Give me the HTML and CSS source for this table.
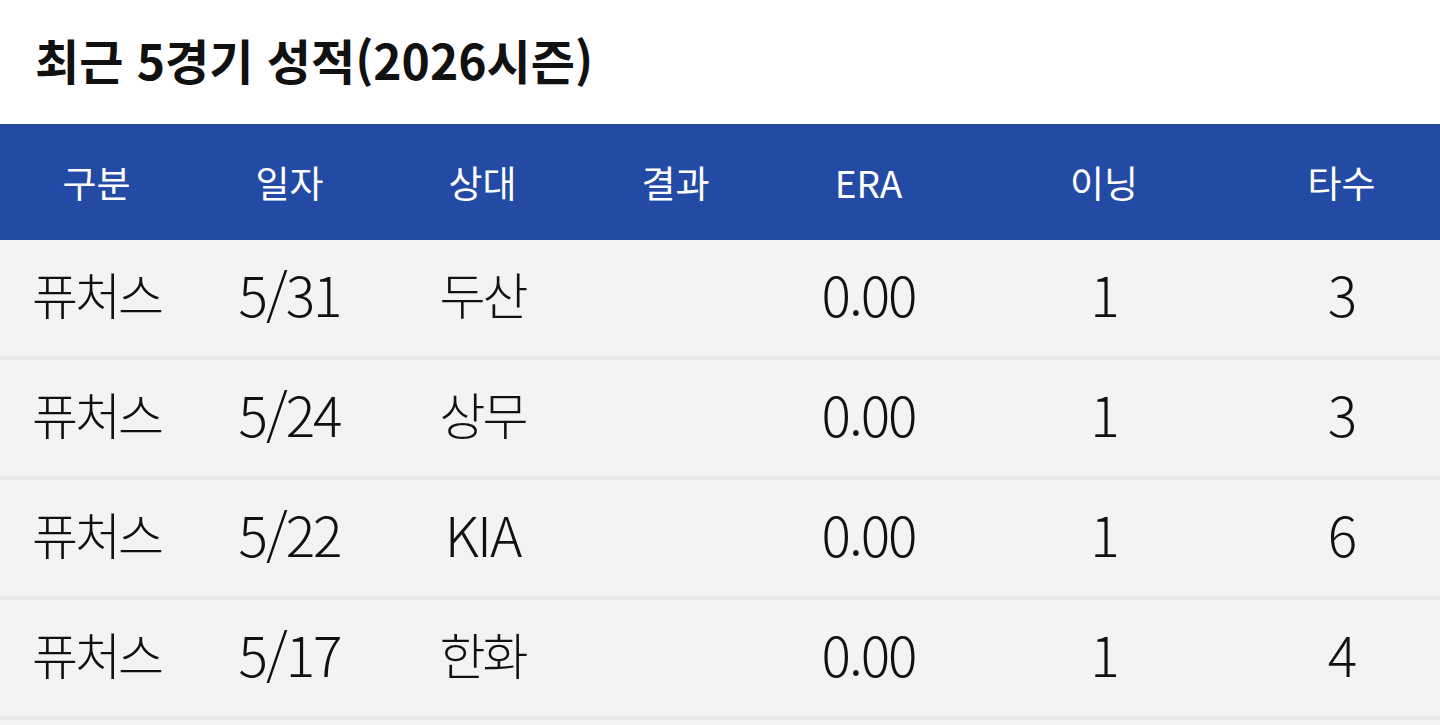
FILE: index.html
```html
<!DOCTYPE html>
<html lang="ko">
<head>
<meta charset="utf-8">
<title>최근 5경기 성적</title>
<link rel="stylesheet" href="styles.css">
</head>
<body>
<section class="panel">
  <h2 class="title">최근 5경기 성적(2026시즌)</h2>
  <div class="table">
    <div class="row head">
      <div class="cell">구분</div>
      <div class="cell">일자</div>
      <div class="cell">상대</div>
      <div class="cell">결과</div>
      <div class="cell">ERA</div>
      <div class="cell">이닝</div>
      <div class="cell">타수</div>
    </div>
    <div class="row body">
      <div class="cell">퓨처스</div>
      <div class="cell num">5/31</div>
      <div class="cell">두산</div>
      <div class="cell"></div>
      <div class="cell num">0.00</div>
      <div class="cell num">1</div>
      <div class="cell num">3</div>
    </div>
    <div class="row body">
      <div class="cell">퓨처스</div>
      <div class="cell num">5/24</div>
      <div class="cell">상무</div>
      <div class="cell"></div>
      <div class="cell num">0.00</div>
      <div class="cell num">1</div>
      <div class="cell num">3</div>
    </div>
    <div class="row body">
      <div class="cell">퓨처스</div>
      <div class="cell num">5/22</div>
      <div class="cell num">KIA</div>
      <div class="cell"></div>
      <div class="cell num">0.00</div>
      <div class="cell num">1</div>
      <div class="cell num">6</div>
    </div>
    <div class="row body">
      <div class="cell">퓨처스</div>
      <div class="cell num">5/17</div>
      <div class="cell">한화</div>
      <div class="cell"></div>
      <div class="cell num">0.00</div>
      <div class="cell num">1</div>
      <div class="cell num">4</div>
    </div>
    <div class="row body">
      <div class="cell"></div>
      <div class="cell"></div>
      <div class="cell"></div>
      <div class="cell"></div>
      <div class="cell"></div>
      <div class="cell"></div>
      <div class="cell"></div>
    </div>
  </div>
</section>
</body>
</html>
```

FILE: styles.css
```css
html, body {
  margin: 0;
  padding: 0;
  background: #ffffff;
  overflow: hidden;
}
body {
  font-family: "Noto Sans CJK KR", "Noto Sans", sans-serif;
  color: #111111;
}
.panel {
  width: 1440px;
}
.title {
  margin: 0;
  height: 124px;
  display: flex;
  align-items: center;
  padding-left: 35px;
  padding-bottom: 6px;
  font-size: 48px;
  font-weight: 700;
  letter-spacing: 0;
  color: #111111;
  box-sizing: border-box;
}
.table {
  display: flex;
  flex-direction: column;
}
.row {
  display: grid;
  grid-template-columns: 193px 193px 193px 193px 193px 278px 197px;
  align-items: center;
  box-sizing: border-box;
}
.head {
  height: 116px;
  background: #234aa5;
  color: #ffffff;
  font-size: 37px;
  font-weight: 400;
}
.body {
  height: 120px;
  background: #f2f4f3;
  border-bottom: 4px solid #e6e8ea;
  padding-bottom: 10px;
  font-size: 50px;
  font-weight: 300;
  letter-spacing: -3px;
}
.body .num {
  font-size: 55px;
  letter-spacing: -2px;
}
.cell {
  text-align: center;
  line-height: 1;
}
```
